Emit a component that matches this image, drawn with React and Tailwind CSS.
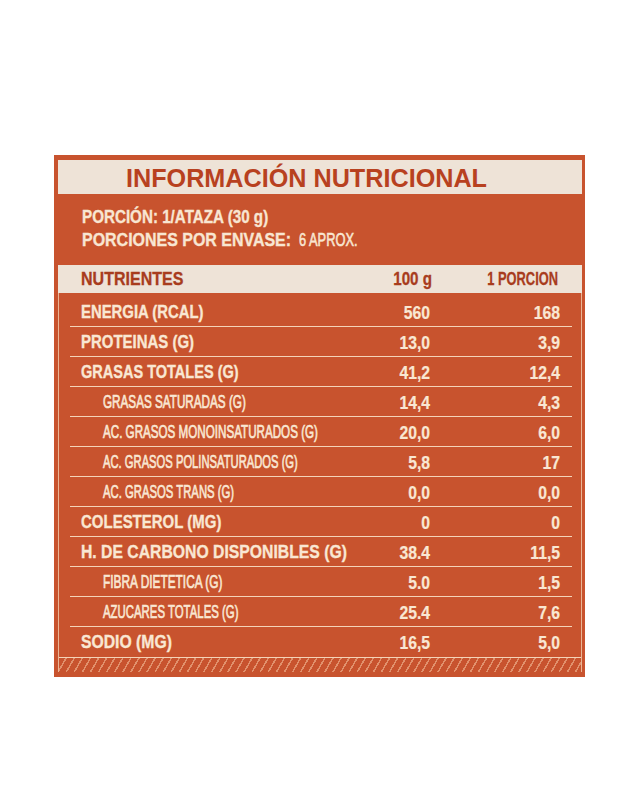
import React from "react";

const rows = [
  { label: "ENERGIA (RCAL)", a: "560", b: "168", sub: false, sc: "scale-x-[0.804]" },
  { label: "PROTEINAS (G)", a: "13,0", b: "3,9", sub: false, sc: "scale-x-[0.809]" },
  { label: "GRASAS TOTALES (G)", a: "41,2", b: "12,4", sub: false, sc: "scale-x-[0.785]" },
  { label: "GRASAS SATURADAS (G)", a: "14,4", b: "4,3", sub: true, sc: "scale-x-[0.65]" },
  { label: "AC. GRASOS MONOINSATURADOS (G)", a: "20,0", b: "6,0", sub: true, sc: "scale-x-[0.646]" },
  { label: "AC. GRASOS POLINSATURADOS (G)", a: "5,8", b: "17", sub: true, sc: "scale-x-[0.623]" },
  { label: "AC. GRASOS TRANS (G)", a: "0,0", b: "0,0", sub: true, sc: "scale-x-[0.628]" },
  { label: "COLESTEROL (MG)", a: "0", b: "0", sub: false, sc: "scale-x-[0.81]" },
  { label: "H. DE CARBONO DISPONIBLES (G)", a: "38.4", b: "11,5", sub: false, sc: "scale-x-[0.851]" },
  { label: "FIBRA DIETETICA (G)", a: "5.0", b: "1,5", sub: true, sc: "scale-x-[0.66]" },
  { label: "AZUCARES TOTALES (G)", a: "25.4", b: "7,6", sub: true, sc: "scale-x-[0.633]" },
  { label: "SODIO (MG)", a: "16,5", b: "5,0", sub: false, sc: "scale-x-[0.851]", last: true },
];

const lib = "font-['Liberation_Sans',Arial,sans-serif]";

export default function App() {
  return (
    <div className="w-[635px] h-[810px] bg-white pt-[155px] pl-[54px]">
      <div className="w-[531px] bg-[#c8532e] pt-[5px] pb-[5px] pl-[4px] pr-[3px]">
        <div className={`flex flex-col ${lib}`}>
          {/* Title band */}
          <div className="h-[34px] bg-[#eee3d7] pl-[68px] pt-[2px]">
            <span className="font-bold text-[25.2px] leading-[32px] text-[#b8411f] whitespace-nowrap">
              INFORMACIÓN NUTRICIONAL
            </span>
          </div>
          {/* Portion */}
          <div className="h-[71px] pt-[11px] pl-[24px] text-[#f8e6d2] text-[18.5px] leading-[23px]">
            <div className="whitespace-nowrap">
              <span className="inline-block origin-left scale-x-[0.821] font-bold [-webkit-text-stroke:0.35px_#f8e6d2]">
                PORCIÓN: 1/ATAZA (30 g)
              </span>
            </div>
            <div className="flex items-baseline whitespace-nowrap">
              <span className="inline-block shrink-0 origin-left scale-x-[0.863] font-bold w-[217px] [-webkit-text-stroke:0.35px_#f8e6d2]">
                PORCIONES POR ENVASE:
              </span>
              <span className="inline-block origin-left scale-x-[0.695] font-normal [-webkit-text-stroke:0.6px_#f8e6d2]">
                6 APROX.
              </span>
            </div>
          </div>
          {/* Header band */}
          <div className="h-[28px] bg-[#eee3d7] font-bold text-[18px] text-[#a83c1d] [-webkit-text-stroke:0.3px_#a83c1d]">
            <div className="ml-[12px] mr-[10px] h-full grid grid-cols-[minmax(0,1fr)_90px_126px] items-center pl-[11px] pr-[14px] leading-[28px] whitespace-nowrap">
              <span className="inline-block origin-left scale-x-[0.89]">NUTRIENTES</span>
              <span className="flex justify-end">
                <span className="inline-block origin-right scale-x-[0.844]">100 g</span>
              </span>
              <span className="flex justify-end">
                <span className="inline-block origin-right scale-x-[0.715]">1 PORCION</span>
              </span>
            </div>
          </div>
          {/* Rows */}
          <div className="border-l border-r border-[#eab595] pt-[4px] text-[#f9e7d3]">
            {rows.map((r, i) => (
              <div
                key={i}
                className={`ml-[11px] mr-[9px] h-[30px] grid grid-cols-[minmax(0,1fr)_90px_130px] items-center pl-[11px] pr-[12px] whitespace-nowrap leading-[30px] ${
                  r.last ? "" : "border-b-[1.5px] border-[#f4d3b8]"
                }`}
              >
                <span className={r.sub ? "pl-[22px]" : ""}>
                  <span
                    className={`inline-block origin-left ${r.sc} ${
                      r.sub
                        ? "text-[18px] font-normal [-webkit-text-stroke:0.7px_#f9e7d3]"
                        : "text-[18.5px] font-bold [-webkit-text-stroke:0.35px_#f9e7d3]"
                    }`}
                  >
                    {r.label}
                  </span>
                </span>
                <span className="flex justify-end">
                  <span className="inline-block origin-right scale-x-[0.875] text-[18px] font-bold [-webkit-text-stroke:0.2px_#f9e7d3]">{r.a}</span>
                </span>
                <span className="flex justify-end">
                  <span className="inline-block origin-right scale-x-[0.875] text-[18px] font-bold [-webkit-text-stroke:0.2px_#f9e7d3]">{r.b}</span>
                </span>
              </div>
            ))}
            <div className="h-[15px] border-t-[1.5px] border-[#f4d3b8] bg-[repeating-linear-gradient(120deg,transparent_0px,transparent_5.5px,rgba(246,196,160,0.55)_5.5px,rgba(246,196,160,0.55)_7px)]" />
          </div>
        </div>
      </div>
    </div>
  );
}
